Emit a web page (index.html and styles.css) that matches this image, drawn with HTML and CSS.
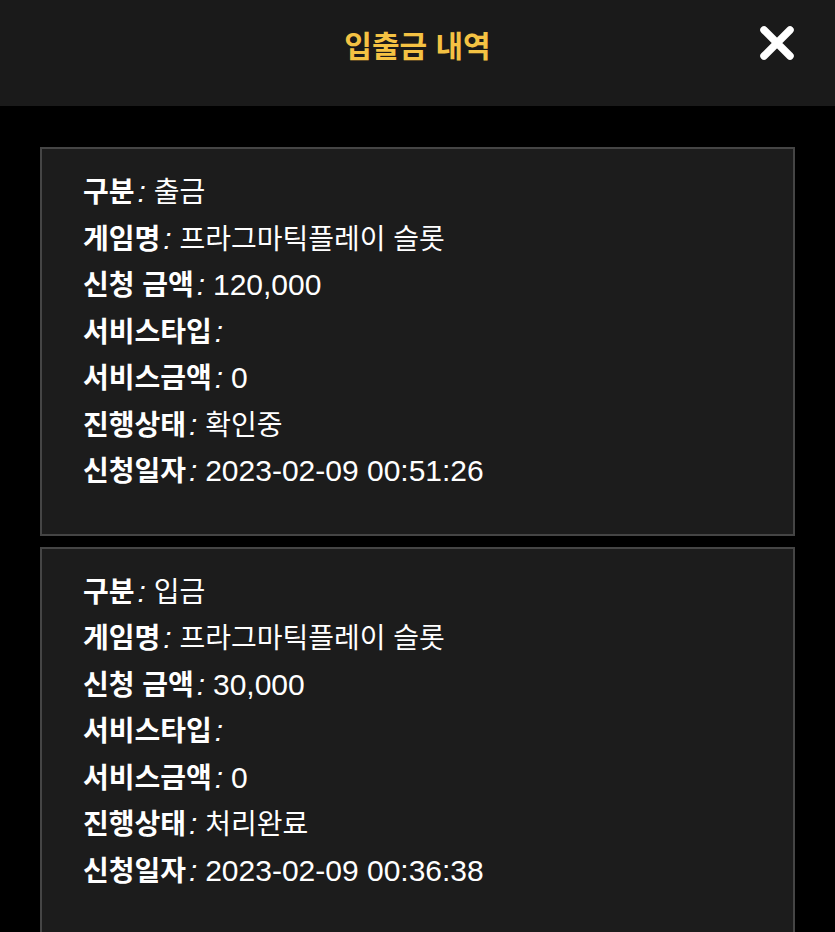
FILE: index.html
```html
<!DOCTYPE html>
<html lang="ko">
<head>
<meta charset="utf-8">
<link rel="stylesheet" href="styles.css">
</head>
<body>
<header class="topbar">
  <h1 class="title">입출금 내역</h1>
  <button class="close" aria-label="닫기">
    <svg viewBox="0 0 36 34" width="36" height="34"><path d="M5 4 L31 30 M31 4 L5 30" stroke="#fff" stroke-width="7.5" stroke-linecap="round" fill="none"/></svg>
  </button>
</header>
<main class="list">
  <section class="card">
    <p class="row"><b>구분</b><i>:</i> 출금</p>
    <p class="row"><b>게임명</b><i>:</i> 프라그마틱플레이 슬롯</p>
    <p class="row"><b>신청 금액</b><i>:</i> <span class="num">120,000</span></p>
    <p class="row"><b>서비스타입</b><i>:</i></p>
    <p class="row"><b>서비스금액</b><i>:</i> <span class="num">0</span></p>
    <p class="row"><b>진행상태</b><i>:</i> 확인중</p>
    <p class="row"><b>신청일자</b><i>:</i> <span class="num">2023-02-09 00:51:26</span></p>
  </section>
  <section class="card">
    <p class="row"><b>구분</b><i>:</i> 입금</p>
    <p class="row"><b>게임명</b><i>:</i> 프라그마틱플레이 슬롯</p>
    <p class="row"><b>신청 금액</b><i>:</i> <span class="num">30,000</span></p>
    <p class="row"><b>서비스타입</b><i>:</i></p>
    <p class="row"><b>서비스금액</b><i>:</i> <span class="num">0</span></p>
    <p class="row"><b>진행상태</b><i>:</i> 처리완료</p>
    <p class="row"><b>신청일자</b><i>:</i> <span class="num">2023-02-09 00:36:38</span></p>
  </section>
</main>
</body>
</html>
```
FILE: styles.css
```css
html, body {
  margin: 0;
  padding: 0;
  background: #000;
}
body {
  font-family: "Liberation Sans", "Noto Sans CJK KR", sans-serif;
  color: #fff;
}
.topbar {
  height: 106px;
  background: #1a1a1a;
  display: flex;
  align-items: center;
  justify-content: center;
  position: relative;
}
.title {
  margin: 0 0 18px 0;
  font-size: 30px;
  font-weight: bold;
  color: #f4c243;
}
.close {
  position: absolute;
  right: 40px;
  top: 26px;
  background: none;
  border: 0;
  padding: 0;
  width: 36px;
  height: 34px;
  cursor: pointer;
}
.close svg { display: block; }
.list {
  padding: 41px 40px 0 40px;
  display: flex;
  flex-direction: column;
  gap: 11px;
}
.card {
  background: #1c1c1c;
  border: 2px solid #454545;
  padding: 21px 41px 38px 41px;
}
.row {
  margin: 0;
  font-size: 28px;
  line-height: 46.5px;
  height: 46.5px;
  white-space: nowrap;
}
.row b { font-weight: bold; }
.row i {
  font-style: italic;
  margin-left: 3px;
  font-size: 30px;
  line-height: 1;
}
.row .num {
  font-size: 30px;
  line-height: 1;
}
```
